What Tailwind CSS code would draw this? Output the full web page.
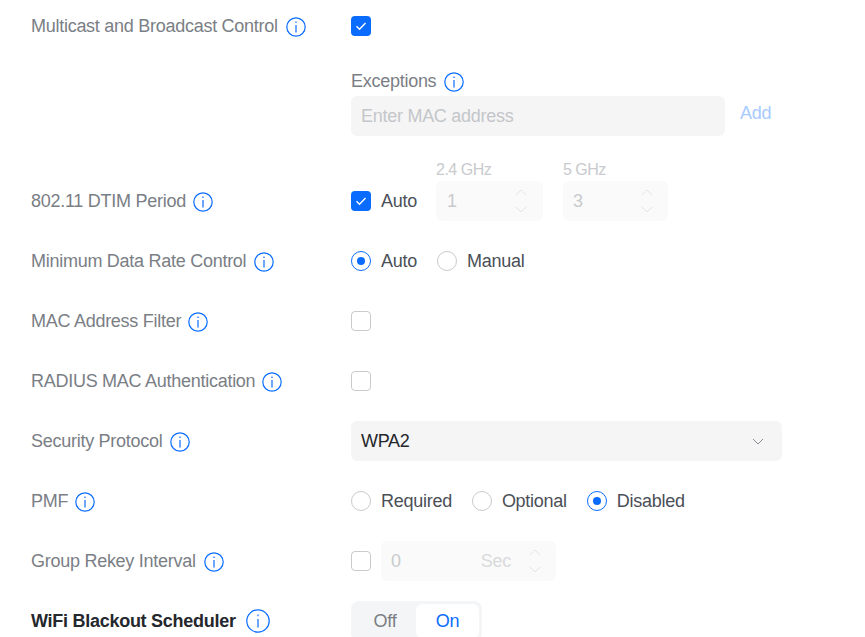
<!DOCTYPE html>
<html lang="en">
<head>
  <meta charset="UTF-8" />
  <meta name="viewport" content="width=device-width, initial-scale=1.0" />
  <title>WiFi Settings</title>
  <script src="https://cdn.jsdelivr.net/npm/@tailwindcss/browser@4"></script>
</head>
<body class="bg-white font-['Liberation_Sans',Arial,sans-serif] text-[18px] tracking-[-0.27px] overflow-hidden h-[637px]">
  <main class="pt-[6px] pl-[31px] h-[637px] overflow-hidden">

    <!-- MULTICAST -->
    <div class="flex items-center h-10">
      <div class="w-[320px] flex items-center gap-2 text-[#7a7e85]">
        <span>Multicast and Broadcast Control</span>
        <svg class="w-5 h-5 mt-[2px]" viewBox="0 0 20 20" fill="none" stroke="#0a6cff" stroke-width="1.2"><circle cx="10" cy="10" r="9.2"/><path d="M10 8v7.5" /><path d="M10 4.4v1.6"/></svg>
      </div>
      <div class="w-5 h-5 rounded-[4px] bg-[#0a6cff] flex items-center justify-center">
        <svg class="w-3 h-3" viewBox="0 0 12 12" fill="none" stroke="#fff" stroke-width="1.4"><path d="M1.5 6.2l3 3 6-6.2"/></svg>
      </div>
    </div>

    <!-- EXCEPTIONS -->
    <div class="ml-[320px] mt-[25px] h-5 flex items-center gap-2 text-[#7a7e85]">
      <span>Exceptions</span>
      <svg class="w-5 h-5 mt-[2px]" viewBox="0 0 20 20" fill="none" stroke="#0a6cff" stroke-width="1.2"><circle cx="10" cy="10" r="9.2"/><path d="M10 8v7.5" /><path d="M10 4.4v1.6"/></svg>
    </div>
    <div class="ml-[320px] mt-[5px] flex">
      <div class="w-[374px] h-10 rounded-md bg-[#f5f5f5] px-[10px] flex items-center text-[#c4c6ca]">Enter MAC address</div>
      <span class="ml-[15px] mt-[4px] text-[#a6cbff]">Add</span>
    </div>

    <!-- DTIM -->
    <div class="flex items-center h-10 mt-[45px]">
      <div class="w-[320px] flex items-center gap-[7px] text-[#7a7e85]">
        <span>802.11 DTIM Period</span>
        <svg class="w-5 h-5 mt-[2px]" viewBox="0 0 20 20" fill="none" stroke="#0a6cff" stroke-width="1.2"><circle cx="10" cy="10" r="9.2"/><path d="M10 8v7.5" /><path d="M10 4.4v1.6"/></svg>
      </div>
      <div class="flex items-end h-10">
        <div class="flex items-center h-10 w-[85px]">
          <div class="w-5 h-5 rounded-[4px] bg-[#0a6cff] flex items-center justify-center">
            <svg class="w-3 h-3" viewBox="0 0 12 12" fill="none" stroke="#fff" stroke-width="1.4"><path d="M1.5 6.2l3 3 6-6.2"/></svg>
          </div>
          <span class="ml-[10px] text-[#4b4f57]">Auto</span>
        </div>
        <div class="w-[107px] mr-5">
          <div class="text-[16px] tracking-[-0.5px] leading-5 text-[#c8cacd] mb-[1px]">2.4 GHz</div>
          <div class="h-10 rounded-md bg-[#fafafa] px-[11px] flex items-center justify-between text-[#c8cacd]">
            <span>1</span>
            <div class="flex flex-col gap-[10px] mr-[5px]">
              <svg class="w-3 h-[7px]" viewBox="0 0 12 7" fill="none" stroke="#e3e4e6"><path d="M1 6l5-5 5 5"/></svg>
              <svg class="w-3 h-[7px]" viewBox="0 0 12 7" fill="none" stroke="#e3e4e6"><path d="M1 1l5 5 5-5"/></svg>
            </div>
          </div>
        </div>
        <div class="w-[105px]">
          <div class="text-[16px] tracking-[-0.5px] leading-5 text-[#c8cacd] mb-[1px]">5 GHz</div>
          <div class="h-10 rounded-md bg-[#fafafa] px-[10px] flex items-center justify-between text-[#c8cacd]">
            <span>3</span>
            <div class="flex flex-col gap-[10px] mr-[5px]">
              <svg class="w-3 h-[7px]" viewBox="0 0 12 7" fill="none" stroke="#e3e4e6"><path d="M1 6l5-5 5 5"/></svg>
              <svg class="w-3 h-[7px]" viewBox="0 0 12 7" fill="none" stroke="#e3e4e6"><path d="M1 1l5 5 5-5"/></svg>
            </div>
          </div>
        </div>
      </div>
    </div>

    <!-- MIN DATA RATE -->
    <div class="flex items-center h-10 mt-5">
      <div class="w-[320px] flex items-center gap-2 text-[#7a7e85]">
        <span>Minimum Data Rate Control</span>
        <svg class="w-5 h-5 mt-[2px]" viewBox="0 0 20 20" fill="none" stroke="#0a6cff" stroke-width="1.2"><circle cx="10" cy="10" r="9.2"/><path d="M10 8v7.5" /><path d="M10 4.4v1.6"/></svg>
      </div>
      <div class="flex items-center text-[#4b4f57]">
        <span class="w-5 h-5 rounded-full border border-[#0a6cff] flex items-center justify-center"><span class="w-2 h-2 rounded-full bg-[#0a6cff]"></span></span>
        <span class="ml-[10px] mr-5">Auto</span>
        <span class="w-5 h-5 rounded-full border border-[#c8cacd]"></span>
        <span class="ml-[10px]">Manual</span>
      </div>
    </div>

    <!-- MAC FILTER -->
    <div class="flex items-center h-10 mt-5">
      <div class="w-[320px] flex items-center gap-[7px] text-[#7a7e85]">
        <span>MAC Address Filter</span>
        <svg class="w-5 h-5 mt-[2px]" viewBox="0 0 20 20" fill="none" stroke="#0a6cff" stroke-width="1.2"><circle cx="10" cy="10" r="9.2"/><path d="M10 8v7.5" /><path d="M10 4.4v1.6"/></svg>
      </div>
      <div class="w-5 h-5 rounded-[4px] border border-[#c8cacd]"></div>
    </div>

    <!-- RADIUS -->
    <div class="flex items-center h-10 mt-5">
      <div class="w-[320px] flex items-center gap-[7px] text-[#7a7e85]">
        <span>RADIUS MAC Authentication</span>
        <svg class="w-5 h-5 mt-[2px]" viewBox="0 0 20 20" fill="none" stroke="#0a6cff" stroke-width="1.2"><circle cx="10" cy="10" r="9.2"/><path d="M10 8v7.5" /><path d="M10 4.4v1.6"/></svg>
      </div>
      <div class="w-5 h-5 rounded-[4px] border border-[#c8cacd]"></div>
    </div>

    <!-- SECURITY -->
    <div class="flex items-center h-10 mt-5">
      <div class="w-[320px] flex items-center gap-2 text-[#7a7e85]">
        <span>Security Protocol</span>
        <svg class="w-5 h-5 mt-[2px]" viewBox="0 0 20 20" fill="none" stroke="#0a6cff" stroke-width="1.2"><circle cx="10" cy="10" r="9.2"/><path d="M10 8v7.5" /><path d="M10 4.4v1.6"/></svg>
      </div>
      <div class="w-[431px] h-10 rounded-md bg-[#f5f5f5] pl-[10px] pr-[18px] flex items-center justify-between text-[#24272c]">
        <span>WPA2</span>
        <svg class="w-3 h-[7px]" viewBox="0 0 12 7" fill="none" stroke="#8b8e94"><path d="M1 1l5 5 5-5"/></svg>
      </div>
    </div>

    <!-- PMF -->
    <div class="flex items-center h-10 mt-5">
      <div class="w-[320px] flex items-center gap-[7px] text-[#7a7e85]">
        <span>PMF</span>
        <svg class="w-5 h-5 mt-[2px]" viewBox="0 0 20 20" fill="none" stroke="#0a6cff" stroke-width="1.2"><circle cx="10" cy="10" r="9.2"/><path d="M10 8v7.5" /><path d="M10 4.4v1.6"/></svg>
      </div>
      <div class="flex items-center text-[#4b4f57]">
        <span class="w-5 h-5 rounded-full border border-[#c8cacd]"></span>
        <span class="ml-[10px] mr-5">Required</span>
        <span class="w-5 h-5 rounded-full border border-[#c8cacd]"></span>
        <span class="ml-[10px] mr-5">Optional</span>
        <span class="w-5 h-5 rounded-full border border-[#0a6cff] flex items-center justify-center"><span class="w-2 h-2 rounded-full bg-[#0a6cff]"></span></span>
        <span class="ml-[10px]">Disabled</span>
      </div>
    </div>

    <!-- REKEY -->
    <div class="flex items-center h-10 mt-5">
      <div class="w-[320px] flex items-center gap-2 text-[#7a7e85]">
        <span>Group Rekey Interval</span>
        <svg class="w-5 h-5 mt-[2px]" viewBox="0 0 20 20" fill="none" stroke="#0a6cff" stroke-width="1.2"><circle cx="10" cy="10" r="9.2"/><path d="M10 8v7.5" /><path d="M10 4.4v1.6"/></svg>
      </div>
      <div class="w-5 h-5 rounded-[4px] border border-[#c8cacd]"></div>
      <div class="ml-[10px] w-[175px] h-10 rounded-md bg-[#fafafa] px-[10px] flex items-center text-[#d9dadc]">
        <span class="text-[#c8cacd]">0</span>
        <span class="ml-auto mr-[18px]">Sec</span>
        <div class="flex flex-col gap-[10px] mr-[5px]">
          <svg class="w-3 h-[7px]" viewBox="0 0 12 7" fill="none" stroke="#e3e4e6"><path d="M1 6l5-5 5 5"/></svg>
          <svg class="w-3 h-[7px]" viewBox="0 0 12 7" fill="none" stroke="#e3e4e6"><path d="M1 1l5 5 5-5"/></svg>
        </div>
      </div>
    </div>

    <!-- BLACKOUT -->
    <div class="flex items-start h-10 mt-5">
      <div class="w-[320px] h-10 flex items-center gap-[10px] text-[#24272c] font-bold">
        <span>WiFi Blackout Scheduler</span>
        <svg class="w-6 h-6" viewBox="0 0 24 24" fill="none" stroke="#0a6cff" stroke-width="1.2"><circle cx="12" cy="12" r="11.2"/><path d="M12 10v8.5" /><path d="M12 5.4v1.8"/></svg>
      </div>
      <div class="w-[131px] h-10 rounded-lg bg-[#f4f5f6] p-[3px] flex">
        <span class="w-[62px] flex items-center justify-center text-[#7a7e85]">Off</span>
        <span class="w-[63px] rounded-md bg-white flex items-center justify-center text-[#0a6cff]">On</span>
      </div>
    </div>

  </main>
</body>
</html>
